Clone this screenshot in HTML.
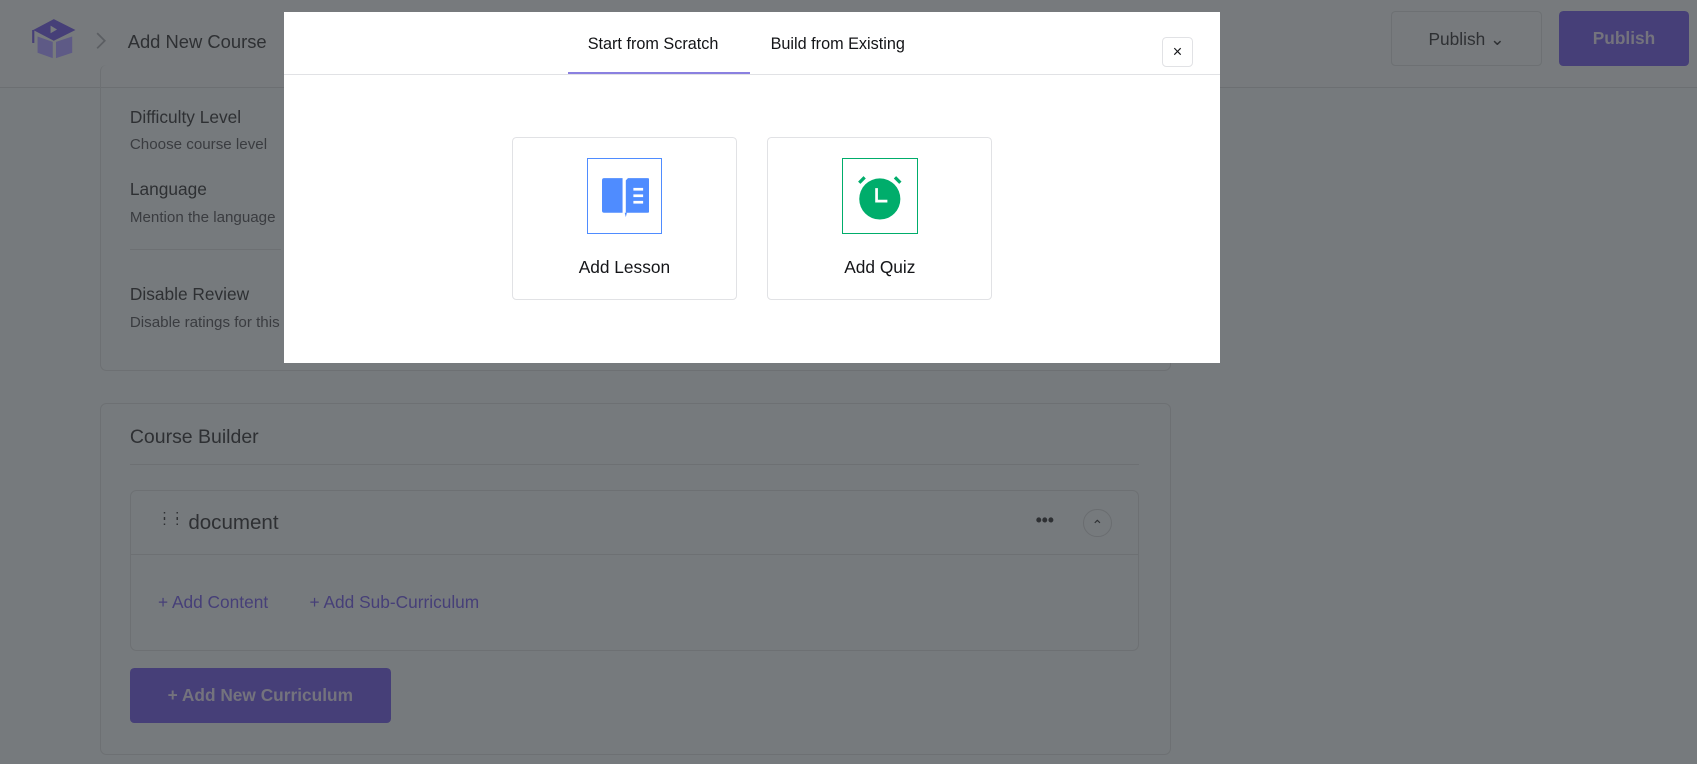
<!DOCTYPE html>
<html><head><style>
html{zoom:1.0823}
body{margin:0;width:1568px;height:706px;overflow:hidden;background:#767a7d;font-family:"Liberation Sans",sans-serif;color:#2c2e31;position:relative}
.hdr{position:absolute;left:0;top:0;width:1568px;height:80px;border-bottom:1px solid #6c6f72;background:#777a7d}
.abs{position:absolute}
.card{position:absolute;border:1px solid #6d7073;border-radius:6px}
.t{font-size:16px;color:#2e3033}
.s{font-size:14px;color:#3a3c40}
.modal{position:absolute;left:262px;top:11px;width:865px;height:324px;background:#fff}
.tile{position:absolute;top:116px;width:206px;height:148px;border:1px solid #e1e2e5;border-radius:4px;background:#fff}
.tile .lab{position:absolute;top:110px;width:100%;text-align:center;font-size:16px;color:#141518}
</style></head><body>
<div class="hdr">
 <svg class="abs" style="left:28px;top:16px" width="46" height="42" viewBox="0 0 46 42">
  <path d="M3 12 L22 2 L42 12 L22 22 Z" fill="#463f78"/>
  <path d="M19 8 L19 15 L25 11.5Z" fill="#777a7d"/>
  <path d="M3 12 V24" stroke="#463f78" stroke-width="2"/>
  <path d="M7 18 L21 23 V38 L7 33Z M24 23 L39 18 V33 L24 38Z" fill="#5e5a86"/>
 </svg>
 <svg class="abs" style="left:88px;top:29px" width="12" height="18"><path d="M2 2 L9 9 L2 16" stroke="#5b5e62" stroke-width="1.6" fill="none"/></svg>
 <div class="abs" style="left:118px;top:29px;font-size:17px;color:#2e3033">Add New Course</div>
 <div class="abs" style="left:1285px;top:10px;width:140px;height:51px;border:1px solid #6d7073;border-radius:4px;box-sizing:border-box;font-size:16px;color:#2e3033;line-height:50px;text-align:center">Publish &#8964;</div>
 <div class="abs" style="left:1440px;top:10px;width:121px;height:51px;background:#463f78;border-radius:4px;font-size:16px;color:#74737d;line-height:51px;text-align:center;font-weight:bold">Publish</div>
</div>
<div class="card" style="left:92px;top:60px;width:988px;height:282px;border-top:none"></div>
<div class="abs t" style="left:120px;top:99px">Difficulty Level</div>
<div class="abs s" style="left:120px;top:126px">Choose course level</div>
<div class="abs t" style="left:120px;top:165px">Language</div>
<div class="abs s" style="left:120px;top:193px">Mention the language</div>
<div class="abs" style="left:120px;top:230px;width:140px;height:1px;background:#6d7073"></div>
<div class="abs t" style="left:120px;top:262px">Disable Review</div>
<div class="abs s" style="left:120px;top:290px">Disable ratings for this</div>

<div class="card" style="left:92px;top:372px;width:988px;height:324px"></div>
<div class="abs" style="left:120px;top:394px;font-size:18px;color:#2e3033">Course Builder</div>
<div class="abs" style="left:120px;top:429px;width:932px;height:1px;background:#6d7073"></div>
<div class="card" style="left:120px;top:453px;width:931px;height:147px"></div>
<div class="abs" style="left:121px;top:512px;width:931px;height:1px;background:#6d7073"></div>
<div class="abs" style="left:150px;top:474px;font-size:14px;color:#2e3033;line-height:5px;letter-spacing:2px">: :<br>: :</div>
<div class="abs" style="left:174px;top:472px;font-size:19px;color:#2e3033">document</div>
<div class="abs" style="left:957px;top:471px;font-size:16px;font-weight:bold;color:#2e3033">•••</div>
<div class="abs" style="left:1001px;top:470px;width:26px;height:26px;border:1px solid #6a6d70;border-radius:50%;box-sizing:border-box;text-align:center;line-height:28px;font-size:13px;color:#2e3033">&#8963;</div>
<div class="abs" style="left:146px;top:547px;font-size:16px;color:#463f78">+ Add Content</div>
<div class="abs" style="left:286px;top:547px;font-size:16px;color:#463f78">+ Add Sub-Curriculum</div>
<div class="abs" style="left:120px;top:617px;width:241px;height:51px;background:#463f78;border-radius:4px;font-size:16px;color:#74737d;line-height:51px;text-align:center;font-weight:bold">+ Add New Curriculum</div>

<div class="modal">
 <div class="abs" style="left:281px;top:21px;font-size:15px;color:#141518">Start from Scratch</div>
 <div class="abs" style="left:450px;top:21px;font-size:15px;color:#141518">Build from Existing</div>
 <div class="abs" style="left:263px;top:56px;width:168px;height:2px;background:#8a80e0"></div>
 <div class="abs" style="left:0;top:57px;width:865px;height:1px;background:#e1e2e5"></div>
 <div class="abs" style="left:812px;top:23px;width:28px;height:28px;border:1px solid #e1e2e5;border-radius:4px;box-sizing:border-box;text-align:center;line-height:26px;font-size:15px;color:#141518">&#215;</div>
 <div class="tile" style="left:211px">
  <div class="abs" style="left:68px;top:18px;width:70px;height:70px;border:1px solid #4f8cff;box-sizing:border-box"></div>
  <svg class="abs" style="left:82px;top:35px" width="44" height="40" viewBox="0 0 44 40">
   <path d="M0 4 Q0 2 2 2 H19 V34 H2 Q0 34 0 32Z" fill="#4f8cff"/>
   <path d="M21 34 L22 38 L23 34Z" fill="#4f8cff"/>
   <path d="M24 2 H42 Q44 2 44 4 V32 Q44 34 42 34 H22 V4 Z" fill="#4f8cff"/>
   <rect x="29" y="11" width="9" height="2.5" fill="#fff"/><rect x="29" y="17" width="9" height="2.5" fill="#fff"/><rect x="29" y="23" width="9" height="2.5" fill="#fff"/>
  </svg>
  <div class="lab">Add Lesson</div>
 </div>
 <div class="tile" style="left:447px">
  <div class="abs" style="left:68px;top:18px;width:70px;height:70px;border:1px solid #00ad6b;box-sizing:border-box"></div>
  <svg class="abs" style="left:81px;top:32px" width="44" height="44" viewBox="0 0 44 44">
   <circle cx="22" cy="24" r="19" fill="#00ad6b"/>
   <path d="M3 9 L8 4 M41 9 L36 4" stroke="#00ad6b" stroke-width="3"/>
   <path d="M19 14 V26 H29" stroke="#fff" stroke-width="2.5" fill="none"/>
  </svg>
  <div class="lab">Add Quiz</div>
 </div>
</div>
</body></html>
